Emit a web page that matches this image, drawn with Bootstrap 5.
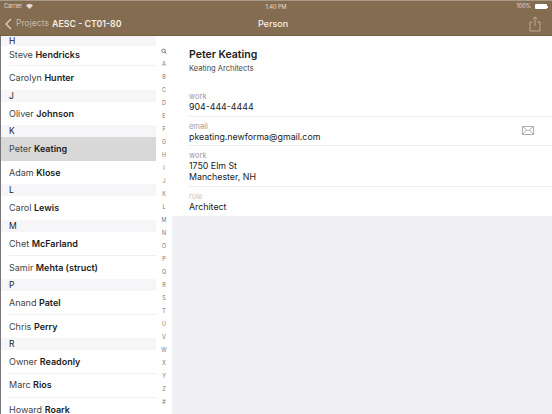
<!DOCTYPE html>
<html lang="en">
<head>
<meta charset="UTF-8" />
<meta name="viewport" content="width=device-width, initial-scale=1" />
<title>Person</title>
<link href="https://cdn.jsdelivr.net/npm/bootstrap@5.3.0/dist/css/bootstrap.min.css" rel="stylesheet" />
<style>
    html, body { height: 100%; }
    body { width: 552px; height: 414px; overflow: hidden; background: #efeff4; font-family: Inter, "Liberation Sans", sans-serif; color: #1c1c1c; }
    .top-bar { height: 36px; background: #846c50; border-top: 1px solid #a89a88; border-bottom: 1px solid #75603f; color: #fff; }
    .status-row { height: 11px; padding: 0 4px; font-size: 5.5px; color: #e6ded4; }
    .nav-row { height: 23px; padding: 0 11px 0 5px; }
    .nav-side { width: 180px; }
    .nav-back { font-size: 8.6px; color: #c9bba9; margin-right: 3px; }
    .nav-project { font-size: 8.8px; font-weight: 600; color: #f4efe9; }
    .nav-title { font-size: 9px; font-weight: 500; color: #f4efe9; }
    .battery-body { width: 12px; height: 5px; background: #fff; border-radius: 1px; }
    .battery-tip { width: 1px; height: 2px; background: #fff; }
    .main-area { height: 378px; }
    .people-col { width: 172px; background: #fff; border-left: 1px solid #77777b; }
    .people-list { width: 155px; }
    .letter-head { height: 12px; padding-left: 8px; background: #f6f6f8; font-size: 8.5px; line-height: 12px; color: #222; }
    .first-head { height: 10px; line-height: 10px; }
    .person-row { height: 23.6px; margin-left: 8px; font-size: 9px; color: #444; border-bottom: 1px solid #f0f0f0; }
    .person-row b { font-weight: 600; color: #1c1c1c; }
    .person-row.last-row { border-bottom: 0; }
    .person-row.first-row { height: 20px; align-items: flex-start !important; padding-top: 1.5px; }
    .person-row.selected { margin-left: 0; padding-left: 8px; background: #d8d8d8; }
    .index-col { width: 16px; padding-top: 8.5px; }
    .index-col span, .index-col svg { height: 13px; line-height: 13px; font-size: 5.5px; color: #777; text-align: center; }
    .search-mark { width: 6px; margin: 0 auto; }
    .detail-col { min-width: 0; }
    .detail-box { background: #fff; }
    .detail-head { height: 46px; padding: 12px 0 0 17px; }
    .detail-name { font-size: 10.5px; font-weight: 600; line-height: 14px; color: #1c1c1c; }
    .detail-company { font-size: 7.5px; line-height: 12px; margin-top: 1px; color: #444; }
    .field-row { margin-left: 17px; border-bottom: 1px solid #ececec; }
    .field-label { font-size: 7.5px; line-height: 9px; color: #9a9a9a; }
    .field-label.pale { color: #c4c4c4; }
    .field-value { font-size: 8.8px; line-height: 11px; color: #222; }
    .phone-row { height: 35px; padding-top: 10px; }
    .email-row { height: 30px; padding-top: 5.5px; margin-top: -1px; }
    .address-row { height: 41px; padding-top: 5px; }
    .role-row { height: 29px; padding-top: 4.5px; border-bottom: 0; }
    .mail-mark { margin: 4.5px 18px 0 0; }
</style>
</head>
<body>

<div class="top-bar d-flex flex-column">
    <div class="status-row d-flex align-items-center justify-content-between position-relative">
        <div class="d-flex align-items-center gap-1">
            <span>Carrier</span>
            <svg width="7" height="5" viewBox="0 0 14 10"><path d="M7 10 0 3a10 10 0 0 1 14 0z" fill="#e6ded4"/></svg>
        </div>
        <span class="position-absolute top-50 start-50 translate-middle">1:40 PM</span>
        <div class="d-flex align-items-center gap-1">
            <span>100%</span>
            <div class="d-flex align-items-center">
                <div class="battery-body"></div>
                <div class="battery-tip"></div>
            </div>
        </div>
    </div>
    <div class="nav-row d-flex align-items-center justify-content-between">
        <div class="nav-side d-flex align-items-center">
            <svg width="7" height="12" viewBox="0 0 7 12" class="me-1"><path d="M6 1 1 6l5 5" fill="none" stroke="#d8ccbd" stroke-width="1.4"/></svg>
            <span class="nav-back">Projects</span>
            <span class="nav-project">AESC - CT01-80</span>
        </div>
        <span class="nav-title">Person</span>
        <div class="nav-side d-flex justify-content-end">
            <svg width="12" height="16" viewBox="0 0 12 16"><path d="M3.5 6H1v9h10V6H8.5M6 10V1M3.5 3.2 6 .8l2.5 2.4" fill="none" stroke="#c9bba9" stroke-width=".8"/></svg>
        </div>
    </div>
</div>

<div class="main-area d-flex">
    <div class="people-col d-flex flex-shrink-0">
        <div class="people-list">
            <div class="letter-head first-head">H</div>
            <div class="person-row first-row d-flex align-items-center"><span>Steve <b>Hendricks</b></span></div>
            <div class="person-row last-row d-flex align-items-center"><span>Carolyn <b>Hunter</b></span></div>
            <div class="letter-head">J</div>
            <div class="person-row last-row d-flex align-items-center"><span>Oliver <b>Johnson</b></span></div>
            <div class="letter-head">K</div>
            <div class="person-row last-row selected d-flex align-items-center"><span>Peter <b>Keating</b></span></div>
            <div class="person-row last-row d-flex align-items-center"><span>Adam <b>Klose</b></span></div>
            <div class="letter-head">L</div>
            <div class="person-row last-row d-flex align-items-center"><span>Carol <b>Lewis</b></span></div>
            <div class="letter-head">M</div>
            <div class="person-row d-flex align-items-center"><span>Chet <b>McFarland</b></span></div>
            <div class="person-row last-row d-flex align-items-center"><span>Samir <b>Mehta (struct)</b></span></div>
            <div class="letter-head">P</div>
            <div class="person-row d-flex align-items-center"><span>Anand <b>Patel</b></span></div>
            <div class="person-row last-row d-flex align-items-center"><span>Chris <b>Perry</b></span></div>
            <div class="letter-head">R</div>
            <div class="person-row d-flex align-items-center"><span>Owner <b>Readonly</b></span></div>
            <div class="person-row d-flex align-items-center"><span>Marc <b>Rios</b></span></div>
            <div class="person-row last-row d-flex align-items-center"><span>Howard <b>Roark</b></span></div>
        </div>
        <div class="index-col d-flex flex-column" id="letterIndex">
            <svg class="search-mark flex-shrink-0" viewBox="0 0 6 13"><circle cx="2.6" cy="5.8" r="1.7" fill="none" stroke="#6e6e6e" stroke-width=".9"/><path d="M3.8 7 5.4 8.7" stroke="#6e6e6e" stroke-width="1"/></svg>
        </div>
    </div>

    <div class="detail-col flex-grow-1">
        <div class="detail-box">
            <div class="detail-head">
                <div class="detail-name">Peter Keating</div>
                <div class="detail-company">Keating Architects</div>
            </div>
            <div class="field-row phone-row">
                <div class="field-label">work</div>
                <div class="field-value">904-444-4444</div>
            </div>
            <div class="field-row email-row d-flex justify-content-between">
                <div>
                    <div class="field-label">email</div>
                    <div class="field-value">pkeating.newforma@gmail.com</div>
                </div>
                <svg class="mail-mark" width="12" height="9" viewBox="0 0 12 9"><path d="M.5.5h11v8H.5zM.5.5 6 5l5.5-4.5M.5 8.5l4-4.500M11.5 8.5l-4-4.500" fill="none" stroke="#8e8e8e" stroke-width=".7"/></svg>
            </div>
            <div class="field-row address-row">
                <div class="field-label">work</div>
                <div class="field-value">1750 Elm St</div>
                <div class="field-value">Manchester, NH</div>
            </div>
            <div class="field-row role-row">
                <div class="field-label pale">role</div>
                <div class="field-value">Architect</div>
            </div>
        </div>
    </div>
</div>

<script src="https://cdn.jsdelivr.net/npm/bootstrap@5.3.0/dist/js/bootstrap.bundle.min.js"></script>
<script>
    // section index down the side of the list
    const box = document.getElementById('letterIndex');
    'ABCDEFGHIJKLMNOPQRSTUVWXYZ#'.split('').forEach(l => {
        const s = document.createElement('span');
        s.textContent = l;
        box.appendChild(s);
    });
</script>
</body>
</html>
